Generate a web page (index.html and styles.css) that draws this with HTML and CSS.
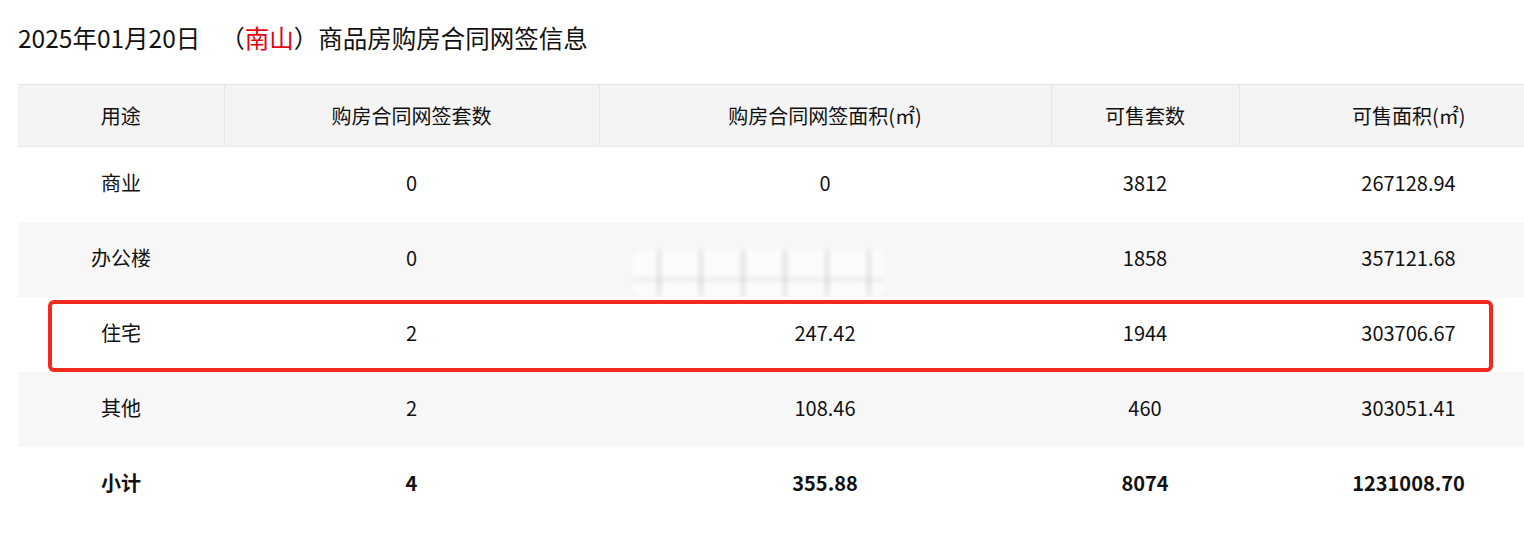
FILE: index.html
```html
<!DOCTYPE html>
<html lang="zh-CN">
<head>
<meta charset="utf-8">
<title>商品房购房合同网签信息</title>
<link rel="stylesheet" href="styles.css">
</head>
<body>
<div class="page">
  <h1 class="title"><span class="date">2025年01月20日</span><span class="paren">（<span class="district">南山</span>）</span>商品房购房合同网签信息</h1>
  <table class="data">
    <colgroup>
      <col class="c1"><col class="c2"><col class="c3"><col class="c4"><col class="c5">
    </colgroup>
    <thead>
      <tr><th>用途</th><th>购房合同网签套数</th><th>购房合同网签面积(㎡)</th><th>可售套数</th><th class="last">可售面积(㎡)</th></tr>
    </thead>
    <tbody>
      <tr><td>商业</td><td>0</td><td>0</td><td>3812</td><td class="last">267128.94</td></tr>
      <tr class="alt"><td>办公楼</td><td>0</td><td class="blurcell"><span class="smear"></span></td><td>1858</td><td class="last">357121.68</td></tr>
      <tr class="mark"><td>住宅</td><td>2</td><td>247.42</td><td>1944</td><td class="last">303706.67</td></tr>
      <tr class="alt"><td>其他</td><td>2</td><td>108.46</td><td>460</td><td class="last">303051.41</td></tr>
      <tr class="total"><td>小计</td><td>4</td><td>355.88</td><td>8074</td><td class="last">1231008.70</td></tr>
    </tbody>
  </table>
  <div class="highlight"></div>
</div>
</body>
</html>
```

FILE: styles.css
```css
html, body {
  margin: 0;
  padding: 0;
  background: #ffffff;
  overflow: hidden;
}
body {
  font-family: "Noto Sans CJK SC", "Noto Sans", sans-serif;
  color: #111;
}
.page {
  position: relative;
  padding: 22px 0 0 18px;
}
.title {
  margin: 0;
  font-size: 24.5px;
  font-weight: normal;
  line-height: 32px;
  height: 32px;
  color: #111;
}
.date {
  margin-right: 20px;
}
.district {
  color: #e60012;
}
.data {
  margin-top: 30px;
  border-collapse: collapse;
  table-layout: fixed;
  width: 1506px;
  font-size: 20px;
}
.c1 { width: 206px; }
.c2 { width: 375px; }
.c3 { width: 452px; }
.c4 { width: 188px; }
.c5 { width: 285px; }
.data th {
  height: 61px;
  background: #f4f4f4;
  border-top: 1px solid #e4e4e4;
  border-bottom: 1px solid #e8e8e8;
  border-left: 1px solid #e8e8e8;
  font-weight: normal;
  padding: 0;
  text-align: center;
}
.data th:first-child { border-left: none; }
.data td {
  height: 71px;
  padding: 0 0 4px;
  text-align: center;
}
.data th.last, .data td.last { padding-left: 54px; }
.data tr.alt td { background: #f7f7f7; }
.data tr.total td { font-weight: bold; }
.blurcell { position: relative; }
.smear {
  position: absolute;
  left: 34px;
  top: 28px;
  width: 252px;
  height: 46px;
  border-radius: 10px;
  background:
    linear-gradient(180deg, transparent 0 28px, rgba(160,160,160,0.25) 28px 31px, transparent 31px),
    repeating-linear-gradient(90deg, transparent 0 24px, rgba(160,160,160,0.3) 24px 28px, transparent 28px 42px),
    #fcfcfc;
  filter: blur(2.5px);
}
.highlight {
  position: absolute;
  left: 48px;
  top: 300px;
  width: 1437px;
  height: 64px;
  border: 4px solid #f22a1d;
  border-radius: 6px;
  pointer-events: none;
}
```
